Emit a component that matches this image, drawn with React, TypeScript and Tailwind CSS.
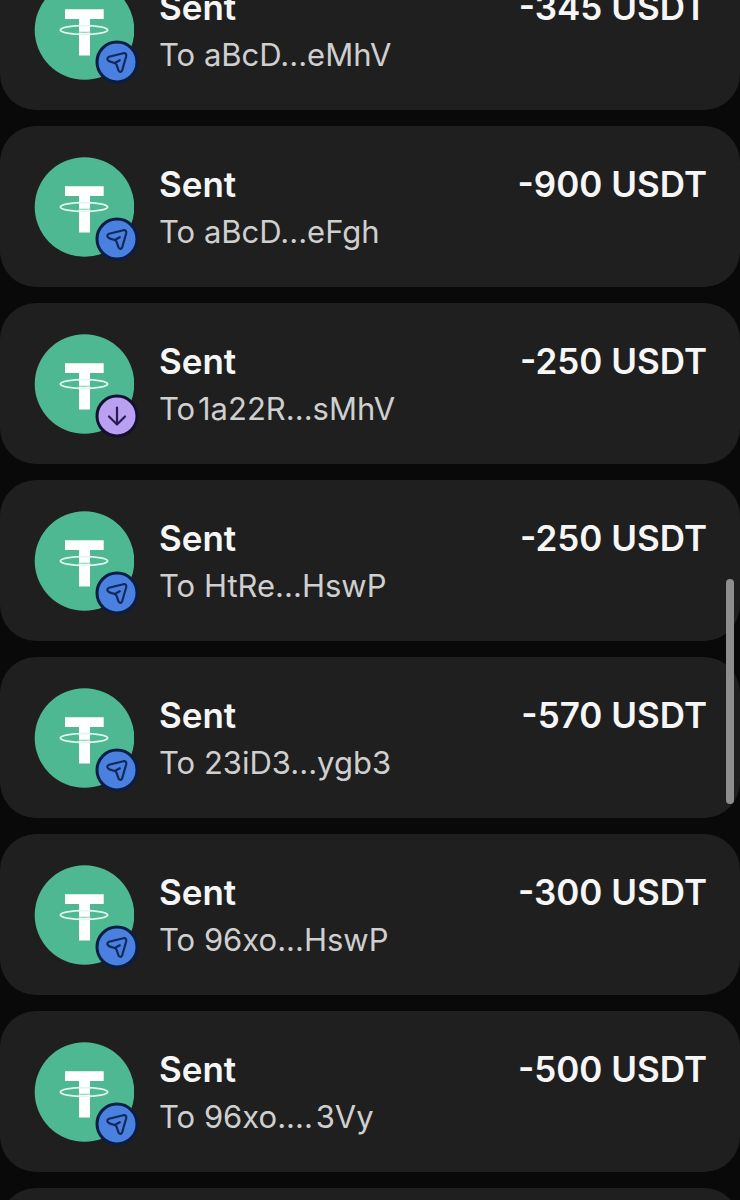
type Kind = "send" | "receive";

interface Transfer {
  address: string;
  amount: string;
  kind: Kind;
}

const transfers: Transfer[] = [
  { address: "To aBcD...eMhV", amount: "-345 USDT", kind: "send" },
  { address: "To aBcD...eFgh", amount: "-900 USDT", kind: "send" },
  { address: "To\u200A1a22R...sMhV", amount: "-250 USDT", kind: "receive" },
  { address: "To HtRe...HswP", amount: "-250 USDT", kind: "send" },
  { address: "To 23iD3...ygb3", amount: "-570 USDT", kind: "send" },
  { address: "To 96xo...HswP", amount: "-300 USDT", kind: "send" },
  { address: "To 96xo....\u200A3Vy", amount: "-500 USDT", kind: "send" },
  { address: "To 96xo...HswP", amount: "-500 USDT", kind: "send" },
];

function TetherLogo() {
  return (
    <svg viewBox="0 0 100 100" className="size-full" aria-hidden="true">
      <circle cx="50.5" cy="50" r="49.8" fill="#4db892" />
      <path d="M31 29.2h38.7v9.8H56v36.5H45V39H31z" fill="#fff" />
      <ellipse cx="50" cy="50" rx="23.6" ry="4.4" fill="none" stroke="#e4f6ef" strokeWidth="1.8" />
      <path d="M44.5 52q6 .8 12 0" fill="none" stroke="#8fd1b8" strokeWidth="1.2" />
    </svg>
  );
}

function Badge({ kind }: { kind: Kind }) {
  if (kind === "receive") {
    return (
      <svg viewBox="0 0 44 44" className="absolute -right-[5px] -bottom-1 size-11" aria-hidden="true">
        <circle cx="22" cy="22" r="20" fill="#b9a0f0" stroke="#150f30" strokeWidth="3" />
        <path d="M22 13.5v16.5M14 22.5l8 8 8-8" fill="none" stroke="#2b1c55" strokeWidth="2.2" strokeLinecap="round" strokeLinejoin="round" />
      </svg>
    );
  }
  return (
    <svg viewBox="0 0 44 44" className="absolute -right-[5px] -bottom-1 size-11" aria-hidden="true">
      <circle cx="22" cy="22" r="20" fill="#4a80e0" stroke="#0a1d42" strokeWidth="3" />
      <path
        d="M14 16.8L28.4 13.2Q31.8 12.8 31.2 16.2L27.2 30.2Q25.6 33.4 23.6 30.6L21.6 24.8Q21 23.4 19.6 23L14.4 21.4Q10.4 18.8 14 16.8ZM20.2 22.8L24.8 20.2"
        fill="none"
        stroke="#12295a"
        strokeWidth="2.2"
        strokeLinecap="round"
        strokeLinejoin="round"
      />
    </svg>
  );
}

function TransferCard({ transfer }: { transfer: Transfer }) {
  return (
    <li className="flex items-start gap-[25px] rounded-[36px] bg-[#1f1f1f] pt-[31px] pr-[33px] pb-[30px] pl-[34px]">
      <div className="relative size-[100px] shrink-0">
        <TetherLogo />
        <Badge kind={transfer.kind} />
      </div>
      <div className="min-w-0 flex-1 pt-1">
        <div className="flex justify-between text-[35px] leading-[47px] font-semibold text-[#f6f6f6]">
          <h2>Sent</h2>
          <p>{transfer.amount}</p>
        </div>
        <p className="text-[31px] leading-[48px] text-[#cfcfcf]">{transfer.address}</p>
      </div>
    </li>
  );
}

export default function App() {
  return (
    <main className="relative h-screen overflow-hidden bg-[#090909] font-['Inter',sans-serif]">
      <ul className="-mt-[51px] flex flex-col gap-4">
        {transfers.map((transfer, index) => (
          <TransferCard key={index} transfer={transfer} />
        ))}
      </ul>
      <div className="absolute top-[579px] right-1.5 h-[225px] w-2 rounded-full bg-[#8d8d8d]" />
    </main>
  );
}
